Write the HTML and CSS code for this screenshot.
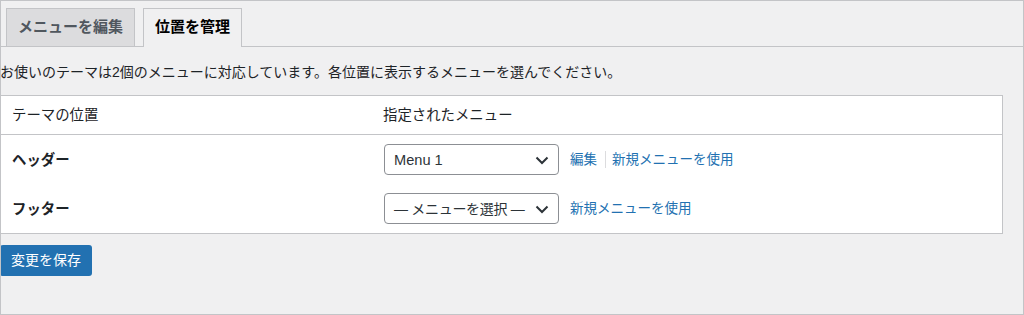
FILE: index.html
```html
<!DOCTYPE html>
<html lang="ja">
<head>
    <meta charset="UTF-8">
    <meta name="viewport" content="width=device-width, initial-scale=1.0">
    <title>メニュー 位置を管理</title>
    <link rel="stylesheet" href="styles.css">
</head>
<body>
    <div class="frame">
        <nav class="tabs">
            <a href="#" class="tab">メニューを編集</a>
            <a href="#" class="tab tab-active">位置を管理</a>
        </nav>

        <div class="content">
            <p class="intro">お使いのテーマは2個のメニューに対応しています。各位置に表示するメニューを選んでください。</p>

            <table class="locations">
                <thead>
                    <tr>
                        <th class="col-place">テーマの位置</th>
                        <th>指定されたメニュー</th>
                    </tr>
                </thead>
                <tbody>
                    <tr>
                        <td class="place">ヘッダー</td>
                        <td>
                            <div class="assign">
                                <div class="select-box">
                                    <span>Menu 1</span>
                                    <svg width="20" height="20" viewBox="0 0 20 20"><polyline points="4.5,7.5 10,13 15.5,7.5" fill="none" stroke="#2c3338" stroke-width="2"/></svg>
                                </div>
                                <span class="links">
                                    <a href="#">編集</a><span class="sep"></span><a href="#">新規メニューを使用</a>
                                </span>
                            </div>
                        </td>
                    </tr>
                    <tr>
                        <td class="place">フッター</td>
                        <td>
                            <div class="assign">
                                <div class="select-box">
                                    <span class="placeholder">— メニューを選択 —</span>
                                    <svg width="20" height="20" viewBox="0 0 20 20"><polyline points="4.5,7.5 10,13 15.5,7.5" fill="none" stroke="#2c3338" stroke-width="2"/></svg>
                                </div>
                                <span class="links">
                                    <a href="#">新規メニューを使用</a>
                                </span>
                            </div>
                        </td>
                    </tr>
                </tbody>
            </table>

            <button class="save-button">変更を保存</button>
        </div>
    </div>
</body>
</html>
```

FILE: styles.css
```css
body {
    margin: 0;
    font-family: "Liberation Sans", "Noto Sans CJK JP", sans-serif;
    color: #1d2327;
}
.frame {
    box-sizing: border-box;
    width: 1024px;
    height: 315px;
    border: 1px solid #c3c4c7;
    background-color: #f0f0f1;
    overflow: hidden;
}
.tabs {
    display: flex;
    align-items: flex-end;
    padding: 7px 0 0 5px;
    border-bottom: 1px solid #c3c4c7;
}
.tab {
    display: block;
    margin-right: 8px;
    padding: 5px 11px 6px;
    border: 1px solid #c3c4c7;
    border-bottom: none;
    background-color: #dcdcde;
    color: #50575e;
    font-size: 15px;
    font-weight: bold;
    line-height: 26px;
    text-decoration: none;
}
.tab-active {
    margin-bottom: -1px;
    padding-bottom: 7px;
    background-color: #f0f0f1;
    color: #000;
}
.content {
    margin-left: -1px;
    padding-right: 20px;
}
.intro {
    margin: 15px 0 13px;
    font-size: 14px;
    line-height: 20px;
}
.locations {
    width: 100%;
    border: 1px solid #c3c4c7;
    border-spacing: 0;
    background-color: #fff;
    table-layout: fixed;
}
.locations th {
    padding: 9px 11px;
    border-bottom: 1px solid #c3c4c7;
    font-size: 14.4px;
    font-weight: normal;
    line-height: 20px;
    text-align: left;
}
.locations .col-place {
    width: 349px;
}
.locations td {
    padding: 9px 11px;
    font-size: 14.4px;
    line-height: 20px;
    vertical-align: middle;
}
.place {
    font-weight: bold;
    color: #1d2327;
}
.assign {
    display: flex;
    align-items: center;
}
.select-box {
    box-sizing: border-box;
    display: flex;
    align-items: center;
    justify-content: space-between;
    width: 175px;
    height: 31px;
    margin-left: 1px;
    padding: 0 6px 0 9px;
    border: 1px solid #8c8f94;
    border-radius: 4px;
    background-color: #fff;
    color: #2c3338;
    font-size: 14.6px;
    white-space: nowrap;
}
.select-box .placeholder {
    font-size: 14px;
    letter-spacing: -0.3px;
}
.select-box svg {
    flex-shrink: 0;
}
.links {
    display: flex;
    align-items: center;
    margin-left: 11px;
    font-size: 13.5px;
}
.links a {
    color: #2271b1;
    text-decoration: none;
}
.sep {
    display: inline-block;
    width: 1px;
    height: 17px;
    margin: 0 6px 0 8px;
    background-color: #dcdcde;
}
.save-button {
    display: block;
    height: 31px;
    margin-top: 11px;
    padding: 0 11px;
    border: none;
    border-radius: 3px;
    background-color: #2271b1;
    color: #fff;
    font-family: "Liberation Sans", "Noto Sans CJK JP", sans-serif;
    font-size: 14px;
    line-height: 31px;
    cursor: pointer;
}
```
